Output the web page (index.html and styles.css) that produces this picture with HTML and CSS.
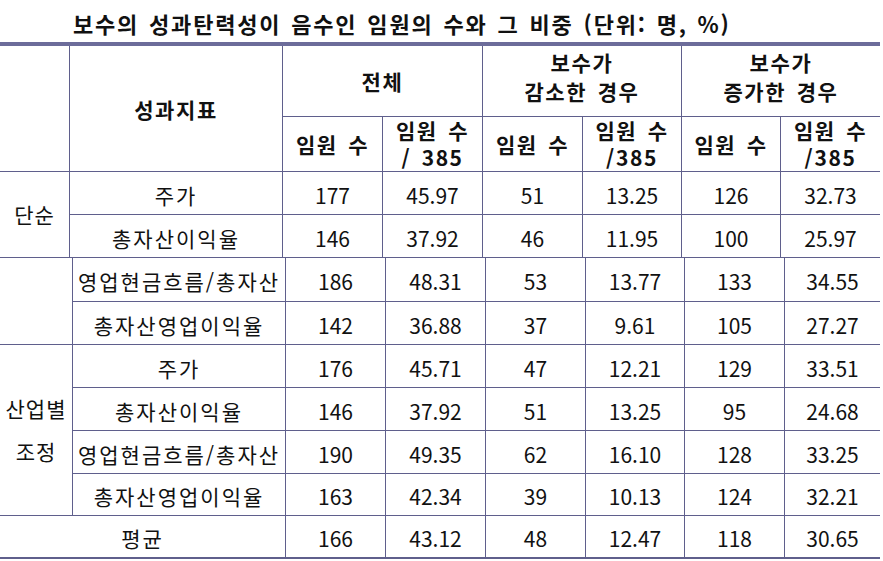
FILE: index.html
```html
<!DOCTYPE html>
<html lang="ko">
<head>
<meta charset="utf-8">
<link rel="stylesheet" href="styles.css">
</head>
<body>
<div class="page">
  <h1 class="title">보수의 성과탄력성이 음수인 임원의 수와 그 비중 (단위: 명, %)</h1>
  <div class="tables">
    <table class="t t1">
      <colgroup>
        <col class="c0"><col class="c1"><col class="c2"><col class="c3"><col class="c4"><col class="c5"><col class="c6"><col class="c7">
      </colgroup>
      <tr class="h1">
        <th rowspan="2" class="first"></th>
        <th rowspan="2">성과지표</th>
        <th colspan="2">전체</th>
        <th colspan="2" class="two">보수가<br>감소한 경우</th>
        <th colspan="2" class="two last">보수가<br>증가한 경우</th>
      </tr>
      <tr class="h2">
        <th>임원 수</th>
        <th>임원 수<br>/ 385</th>
        <th>임원 수</th>
        <th>임원 수<br>/385</th>
        <th>임원 수</th>
        <th class="last">임원 수<br>/385</th>
      </tr>
      <tr class="r43">
        <td rowspan="2" class="first grp">단순</td>
        <td class="lbl">주가</td>
        <td>177</td><td>45.97</td><td>51</td><td>13.25</td><td>126</td><td class="last">32.73</td>
      </tr>
      <tr class="r43">
        <td class="lbl">총자산이익율</td>
        <td>146</td><td>37.92</td><td>46</td><td>11.95</td><td>100</td><td class="last">25.97</td>
      </tr>
    </table>
    <table class="t t2">
      <colgroup>
        <col class="d0"><col class="d1"><col class="d2"><col class="d3"><col class="d4"><col class="d5"><col class="d6"><col class="d7">
      </colgroup>
      <tr class="r44">
        <td rowspan="2" class="first"></td>
        <td class="lbl">영업현금흐름/총자산</td>
        <td>186</td><td>48.31</td><td>53</td><td>13.77</td><td>133</td><td class="last">34.55</td>
      </tr>
      <tr class="r43">
        <td class="lbl">총자산영업이익율</td>
        <td>142</td><td>36.88</td><td>37</td><td>9.61</td><td>105</td><td class="last">27.27</td>
      </tr>
      <tr class="r43">
        <td rowspan="4" class="first grp">산업별<br>조정</td>
        <td class="lbl">주가</td>
        <td>176</td><td>45.71</td><td>47</td><td>12.21</td><td>129</td><td class="last">33.51</td>
      </tr>
      <tr class="r43">
        <td class="lbl">총자산이익율</td>
        <td>146</td><td>37.92</td><td>51</td><td>13.25</td><td>95</td><td class="last">24.68</td>
      </tr>
      <tr class="r43">
        <td class="lbl">영업현금흐름/총자산</td>
        <td>190</td><td>49.35</td><td>62</td><td>16.10</td><td>128</td><td class="last">33.25</td>
      </tr>
      <tr class="r42">
        <td class="lbl">총자산영업이익율</td>
        <td>163</td><td>42.34</td><td>39</td><td>10.13</td><td>124</td><td class="last">32.21</td>
      </tr>
      <tr class="r43 avg">
        <td colspan="2" class="first lbl">평균</td>
        <td>166</td><td>43.12</td><td>48</td><td>12.47</td><td>118</td><td class="last">30.65</td>
      </tr>
    </table>
  </div>
</div>
</body>
</html>
```
FILE: styles.css
```css
html, body {
  margin: 0;
  padding: 0;
  background: #ffffff;
}

body {
  font-family: "Noto Sans CJK KR", "Noto Sans", sans-serif;
  color: #111111;
}

.page {
  width: 883px;
}

.title {
  margin: 0;
  height: 42px;
  display: flex;
  align-items: center;
  justify-content: flex-start;
  padding-left: 73px;
  padding-top: 4px;
  box-sizing: border-box;
  font-size: 22px;
  font-weight: bold;
  letter-spacing: 1.8px;
  word-spacing: 2px;
  line-height: 1;
  white-space: nowrap;
}

.tables {
  width: 880px;
  border-top: 4px solid #6c6c9a;
}

.t {
  width: 880px;
  table-layout: fixed;
  border-collapse: separate;
  border-spacing: 0;
}

.t1 .c0 { width: 70px; }
.t1 .c1 { width: 213px; }
.t1 .c2 { width: 100px; }
.t1 .c3 { width: 100px; }
.t1 .c4 { width: 100px; }
.t1 .c5 { width: 99px; }
.t1 .c6 { width: 99px; }
.t1 .c7 { width: 99px; }

.t2 .d0 { width: 73px; }
.t2 .d1 { width: 213px; }
.t2 .d2 { width: 100px; }
.t2 .d3 { width: 100px; }
.t2 .d4 { width: 100px; }
.t2 .d5 { width: 99px; }
.t2 .d6 { width: 100px; }
.t2 .d7 { width: 95px; }

th, td {
  padding: 0;
  border-right: 1px solid #5f5f8c;
  border-bottom: 1px solid #5f5f8c;
  text-align: center;
  vertical-align: middle;
  font-size: 21px;
  line-height: 28px;
  white-space: nowrap;
}

th {
  font-weight: bold;
  letter-spacing: 1.6px;
  word-spacing: 3px;
}

th.two {
  padding-bottom: 8px;
  line-height: 29px;
}

th.last, td.last {
  border-right: none;
}

.h1 { height: 71px; }
.h2 { height: 55px; }
.r44 { height: 44px; }
.r43 { height: 43px; }
.r42 { height: 42px; }

.h2 th {
  line-height: 27px;
}

td {
  padding-top: 3px;
}

.lbl {
  letter-spacing: 2px;
}

.grp {
  letter-spacing: 1px;
  line-height: 43px;
  padding-top: 0;
}

.avg td {
  border-bottom: 2px solid #5f5f8c;
}
```
